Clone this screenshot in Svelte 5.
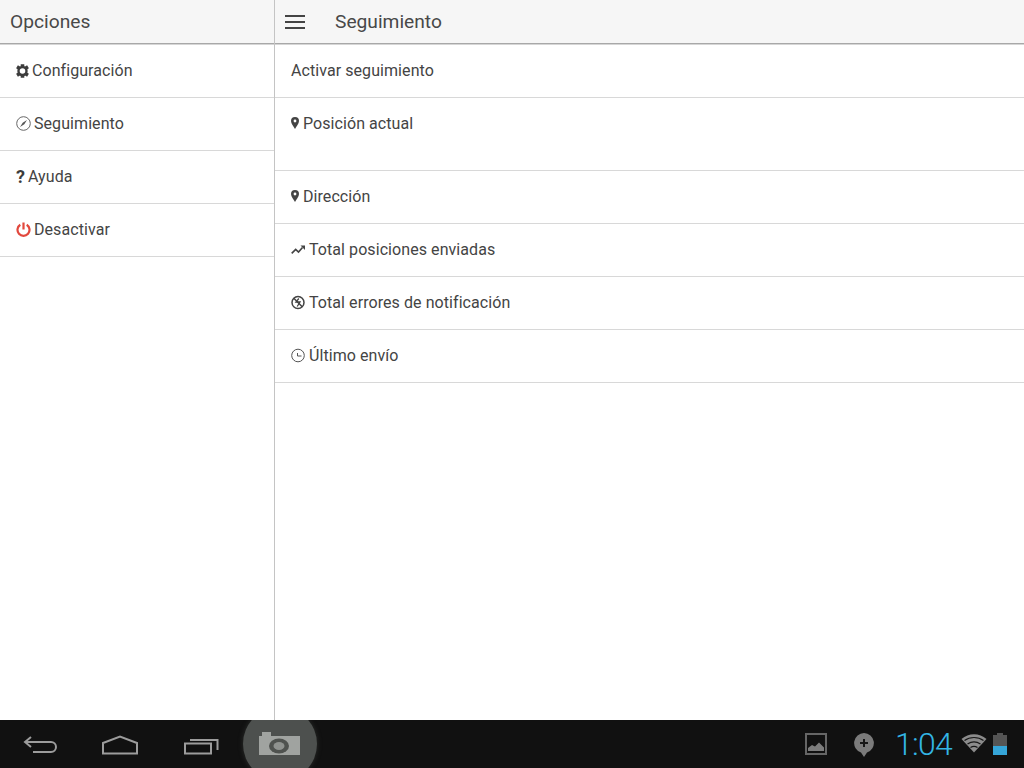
<script>
	const menu = [
		{ icon: 'gear', label: 'Configuración' },
		{ icon: 'compass', label: 'Seguimiento' },
		{ icon: 'help', label: 'Ayuda' },
		{ icon: 'power', label: 'Desactivar' }
	];

	const rows = [
		{ label: 'Activar seguimiento' },
		{ icon: 'pin', label: 'Posición actual', tall: true },
		{ icon: 'pin', label: 'Dirección' },
		{ icon: 'trend', label: 'Total posiciones enviadas' },
		{ icon: 'error', label: 'Total errores de notificación' },
		{ icon: 'clock', label: 'Último envío' }
	];
</script>

{#snippet icon(name)}
	{#if name === 'gear'}
		<svg class="ic" width="13" height="14" viewBox="0 0 13 14">
			<circle cx="6.5" cy="7" r="4" fill="none" stroke="#3c3c3c" stroke-width="2.400" />
			<path d="M4.700 0.200h3.600v2.500h-3.600zM4.700 11.300h3.600v2.500h-3.600zM0.100 4.300l1.800-3 2.400 1.500-1.800 3zM12.900 4.300l-1.800-3-2.400 1.500 1.800 3zM0.100 9.700l1.800 3 2.400-1.500-1.800-3zM12.900 9.700l-1.800 3-2.400-1.500 1.800-3z" fill="#3c3c3c" />
		</svg>
	{:else if name === 'compass'}
		<svg class="ic up" width="15" height="15" viewBox="0 0 15 15">
			<circle cx="7.500" cy="7.500" r="6.800" fill="none" stroke="#666" stroke-width="1" />
			<path d="M11 4L8.300 8.300 6.700 6.700zM4 11l2.700-4.300 1.600 1.600z" fill="#555" />
		</svg>
	{:else if name === 'help'}
		<span class="q">?</span>
	{:else if name === 'power'}
		<svg class="ic up" width="15" height="15" viewBox="0 0 15 15">
			<path d="M4.300 2.700a6 6 0 1 0 6.400 0" fill="none" stroke="#e2483d" stroke-width="2.200" />
			<path d="M7.500 0.500v7" stroke="#e2483d" stroke-width="2.200" />
		</svg>
	{:else if name === 'pin'}
		<svg class="ic" width="9" height="12" viewBox="0 0 9 12">
			<path fill-rule="evenodd" d="M4 0a4 4 0 0 1 4 4c0 2.600-2.600 5.400-4 8C2.600 9.400 0 6.600 0 4a4 4 0 0 1 4-4zM4 2.600a1.400 1.400 0 1 0 0 2.800 1.400 1.400 0 0 0 0-2.800z" fill="#444" />
		</svg>
	{:else if name === 'trend'}
		<svg class="ic low" width="15" height="10" viewBox="0 0 15 10">
			<path d="M0.700 8.400l4-4 2.800 2.600 4-4.600" fill="none" stroke="#444" stroke-width="1.600" />
			<path d="M9.500 0.500h4.500v4.500z" fill="#444" />
		</svg>
	{:else if name === 'error'}
		<svg class="ic up" width="15" height="15" viewBox="0 0 15 15">
			<circle cx="7" cy="7.500" r="6" fill="none" stroke="#444" stroke-width="1.500" />
			<path d="M2.800 3.300l8.400 8.400" stroke="#444" stroke-width="1.500" />
			<path d="M7.800 3.500l-2.800 3.500h4l-2.800 4.500" fill="none" stroke="#444" stroke-width="1.300" />
		</svg>
	{:else if name === 'clock'}
		<svg class="ic up" width="15" height="15" viewBox="0 0 15 15">
			<circle cx="7" cy="7.500" r="6.300" fill="none" stroke="#555" stroke-width="1" />
			<path d="M6.500 5v3h4" fill="none" stroke="#555" stroke-width="1" />
		</svg>
	{/if}
{/snippet}

<div class="screen">
	<div class="panes">
		<aside class="side">
			<header class="bar"><span class="title side-title">Opciones</span></header>
			<ul>
				{#each menu as item}
					<li class="row">{@render icon(item.icon)}<span>{item.label}</span></li>
				{/each}
			</ul>
		</aside>
		<main class="content">
			<header class="bar">
				<svg class="burger" width="20" height="14" viewBox="0 0 20 14">
					<path d="M0 1h20M0 7h20M0 13h20" stroke="#444" stroke-width="2" />
				</svg>
				<span class="title">Seguimiento</span>
			</header>
			<ul>
				{#each rows as item}
					<li class="row" class:tall={item.tall}>
						{#if item.icon}{@render icon(item.icon)}{/if}<span>{item.label}</span>
					</li>
				{/each}
			</ul>
		</main>
	</div>

	<footer class="nav">
		<div class="softkeys">
			<svg class="key back" width="34" height="20" viewBox="0 0 34 20">
				<path d="M8 2L2 7l6 5" fill="none" stroke="#9c9c9c" stroke-width="2" />
				<path d="M3 7h25a4.500 4.500 0 0 1 0 10H10" fill="none" stroke="#9c9c9c" stroke-width="2" />
			</svg>
			<svg class="key home" width="38" height="20" viewBox="0 0 38 20">
				<path d="M2 18.500V8L19 1.500 36 8v10.500z" fill="none" stroke="#9c9c9c" stroke-width="2" />
			</svg>
			<svg class="key recents" width="35" height="20" viewBox="0 0 35 20">
				<path d="M1 8.500h26v10H1z" fill="none" stroke="#9c9c9c" stroke-width="2" />
				<path d="M6 5h27.500v10" fill="none" stroke="#9c9c9c" stroke-width="2" />
			</svg>
			<div class="shot">
				<svg width="42" height="24" viewBox="0 0 42 24">
					<path d="M0 4h3V0h9v4h29v19H0z" fill="#a0a3a0" />
					<ellipse cx="20" cy="14" rx="10" ry="7.500" fill="#4f524f" />
					<ellipse cx="20" cy="14" rx="5.500" ry="4" fill="#8f928f" />
				</svg>
			</div>
		</div>
		<div class="tray">
			<svg width="22" height="22" viewBox="0 0 22 22">
				<path d="M1 1h20v20H1z" fill="none" stroke="#666" stroke-width="2" />
				<path d="M3 18v-3l4-3 3 1.500 4-4 5 5V18z" fill="#7c7c7c" />
			</svg>
			<svg class="t-add" width="20" height="24" viewBox="0 0 20 24">
				<path d="M10 0a10 10 0 0 1 3 19.500L10 24l-3-4.500A10 10 0 0 1 10 0z" fill="#7b7b7b" />
				<path d="M10 6v8M6 10h8" stroke="#161616" stroke-width="2" />
			</svg>
			<span class="clock">1:04</span>
			<svg class="t-wifi" width="26" height="20" viewBox="0 0 26 20">
				<path d="M13 19.500L0.500 6C7.500 -0.500 18.500 -0.500 25.500 6z" fill="#8c8c8c" />
				<path d="M3.500 7.500c5.500-4 13.500-4 19 0M6.500 11c4-2.700 9-2.700 13 0M9.500 14.500c2-1.300 5-1.300 7 0" fill="none" stroke="#161616" stroke-width="1.200" />
			</svg>
			<div class="battery"><span class="cap"></span><span class="cell"><span class="level"></span></span></div>
		</div>
	</footer>
</div>

<style>
	:global(body) {
		margin: 0;
		background: #fff;
	}

	.screen {
		width: 1024px;
		height: 768px;
		display: flex;
		flex-direction: column;
		font-family: Roboto, sans-serif;
		color: #444;
		overflow: hidden;
	}

	.panes {
		flex: 1;
		display: flex;
		min-height: 0;
	}

	.side {
		width: 274px;
		border-right: 1px solid #c4c4c4;
	}

	.content {
		flex: 1;
	}

	.bar {
		height: 43px;
		display: flex;
		align-items: center;
		background: #f6f6f6;
		border-bottom: 1px solid #a8a8a8;
		box-shadow: 0 1px 0 #d6d6d6;
		margin-bottom: 1px;
	}

	.title {
		font-size: 19.2px;
		color: #484848;
	}

	.side-title {
		margin-left: 10px;
	}

	.burger {
		margin: 0 30px 0 10px;
	}

	ul {
		list-style: none;
		margin: 0;
		padding: 0;
	}

	.row {
		height: 53px;
		box-sizing: border-box;
		padding: 16px 16px 0;
		border-bottom: 1px solid #d8d8d8;
		display: flex;
		align-items: flex-start;
		font-size: 16px;
		letter-spacing: 0.07px;
		line-height: 19px;
		gap: 3px;
	}

	.row.tall {
		height: 73px;
	}

	.ic {
		flex: none;
		margin-top: 3px;
	}

	.ic.up {
		margin-top: 2px;
	}

	.ic.low {
		margin-top: 5px;
	}

	.q {
		width: 9px;
		font-weight: 700;
		font-size: 18px;
		color: #3c3c3c;
	}

	.nav {
		height: 48px;
		background: #111;
		display: flex;
		justify-content: space-between;
		align-items: center;
		flex: none;
		overflow: hidden;
	}

	.softkeys {
		display: flex;
		align-items: center;
		padding-left: 23px;
		height: 100%;
	}

	.key {
		margin-top: 2px;
	}

	.home {
		margin-left: 44px;
	}

	.recents {
		margin-left: 45px;
	}

	.shot {
		width: 74px;
		height: 74px;
		flex: none;
		border-radius: 50%;
		background: #4d504e;
		box-shadow: 0 0 5px #2c2e2c;
		display: flex;
		align-items: center;
		justify-content: center;
		margin-left: 24px;
	}

	.tray {
		display: flex;
		align-items: center;
		padding-right: 17px;
	}

	.t-add {
		margin-left: 27px;
		margin-top: 2px;
	}

	.clock {
		margin-left: 21px;
		font-size: 32px;
		font-weight: 300;
		color: #33b5e5;
		letter-spacing: -0.75px;
	}

	.t-wifi {
		margin-left: 9px;
		margin-top: -2px;
	}

	.battery {
		margin-left: 6px;
		display: flex;
		flex-direction: column;
		align-items: center;
		width: 14px;
	}

	.cap {
		width: 6px;
		height: 2px;
		background: #555;
	}

	.cell {
		width: 14px;
		height: 20px;
		background: #555;
		display: flex;
		align-items: flex-end;
	}

	.level {
		width: 100%;
		height: 9px;
		background: #35a5d8;
	}
</style>
